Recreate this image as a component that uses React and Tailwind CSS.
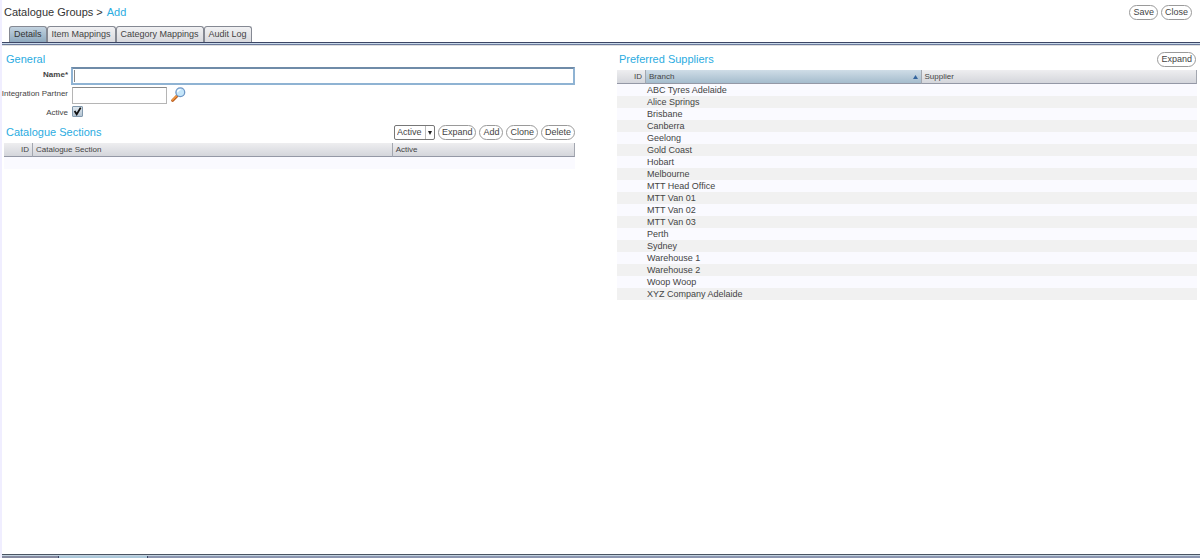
import React, { useState } from 'react';

const tabs = ['Details', 'Item Mappings', 'Category Mappings', 'Audit Log'];

const branches = [
  'ABC Tyres Adelaide',
  'Alice Springs',
  'Brisbane',
  'Canberra',
  'Geelong',
  'Gold Coast',
  'Hobart',
  'Melbourne',
  'MTT Head Office',
  'MTT Van 01',
  'MTT Van 02',
  'MTT Van 03',
  'Perth',
  'Sydney',
  'Warehouse 1',
  'Warehouse 2',
  'Woop Woop',
  'XYZ Company Adelaide',
];

const PillButton = ({ children }) => (
  <button
    type="button"
    className="h-[15px] px-[3px] rounded-full border border-[#9a9a9a] bg-white text-[9px] leading-[13px] text-[#444] hover:bg-gray-100"
  >
    {children}
  </button>
);

const SectionTitle = ({ children }) => (
  <h2 className="text-[11px] leading-[14px] text-[#2bacdf]">{children}</h2>
);

const HeaderCell = ({ children, className = '' }) => (
  <th
    scope="col"
    className={`h-[14px] p-0 px-[3px] border-r border-b border-r-[#a3a7b0] border-b-[#9498a6] text-[8px] leading-[12px] font-normal text-[#444] ${className}`}
  >
    {children}
  </th>
);

const SearchIcon = () => (
  <svg viewBox="0 0 15 15" className="w-[15px] h-[15px]" aria-hidden="true">
    <path d="M1.6 13.4 L6 9" stroke="#b85a1c" strokeWidth="2.8" strokeLinecap="round" />
    <path d="M1.5 13 L5.6 8.9" stroke="#f2993f" strokeWidth="1.5" strokeLinecap="round" />
    <circle cx="9.3" cy="5.3" r="4.4" fill="#c5e6fa" stroke="#6f97c6" strokeWidth="1.3" />
    <path d="M6.6 5.2 A2.8 2.8 0 0 1 9.6 2.6" fill="none" stroke="#fff" strokeWidth="1.3" />
  </svg>
);

const App = () => {
  const [activeTab, setActiveTab] = useState('Details');
  const [form, setForm] = useState({ name: '', partner: '', active: true });
  const [filter, setFilter] = useState('Active');

  const handleChange = (e) => {
    const { name, type, checked, value } = e.target;
    setForm({ ...form, [name]: type === 'checkbox' ? checked : value });
  };

  return (
    <div className="min-h-screen flex flex-col border-l-2 border-[#f0eeff] bg-white font-['Liberation_Sans',Arial,sans-serif] text-[#444]">
      <header>
        <div className="flex justify-between items-start pl-[2px] pr-2 pt-[5px]">
          <h1 className="flex gap-1 text-[11px] leading-[15px] text-[#333]">
            <span>Catalogue Groups &gt;</span>
            <span className="text-[#2bacdf]">Add</span>
          </h1>
          <div className="flex gap-[3px]">
            <PillButton>Save</PillButton>
            <PillButton>Close</PillButton>
          </div>
        </div>

        <nav className="flex pl-[7px] pt-[6px]">
          {tabs.map((tab) => (
            <button
              key={tab}
              type="button"
              onClick={() => setActiveTab(tab)}
              className={`h-4 px-1 rounded-t-[3px] border border-b-0 border-[#858993] text-[9px] leading-[15px] bg-linear-to-b ${
                tab === activeTab
                  ? 'from-[#c3d3e0] to-[#8ea9be] text-[#333]'
                  : 'from-[#f1f1f3] to-[#d9dade] text-[#444]'
              }`}
            >
              {tab}
            </button>
          ))}
        </nav>
        <div className="h-[3px] border-t border-b border-t-[#3d4665] border-b-[#6b7a9c] bg-[#c9d9ea]" />
        <div className="h-px bg-[#dedede]" />
      </header>

      <main className="flex-1 grid grid-cols-[571fr_580fr] gap-x-[42px] pl-[2px] pr-[3px] pt-[6px] items-start">
        <div>
          <div className="pl-[2px] h-[15px]">
            <SectionTitle>General</SectionTitle>
          </div>

          <form onSubmit={(e) => e.preventDefault()} className="flex flex-col gap-[2px] text-[8px]">
            <div className="flex gap-[3px]">
              <label htmlFor="name" className="w-16 flex justify-end leading-[16px] font-bold">
                Name*
              </label>
              <div className="relative flex-1">
                <input
                  id="name"
                  type="text"
                  name="name"
                  value={form.name}
                  onChange={handleChange}
                  className="block w-full h-[18px] px-1 border-2 border-[#8fb3d3] border-t-[#6f8ba8] bg-white text-[9px] outline-none"
                />
                {form.name === '' && (
                  <span className="absolute left-[3px] top-[3px] w-px h-3 bg-[#888] pointer-events-none" />
                )}
              </div>
            </div>

            <div className="flex gap-1">
              <label
                htmlFor="partner"
                className="w-16 flex justify-end leading-[14px] whitespace-nowrap"
              >
                Integration Partner
              </label>
              <input
                id="partner"
                type="text"
                name="partner"
                value={form.partner}
                onChange={handleChange}
                className="w-[95px] h-[17px] px-1 border border-[#b5b5b5] border-t-[#8a8a8a] bg-white text-[9px] outline-none"
              />
              <button type="button" aria-label="Search partners" className="w-[15px] h-[15px]">
                <SearchIcon />
              </button>
            </div>

            <div className="flex gap-1">
              <label htmlFor="active" className="w-16 flex justify-end leading-[14px]">
                Active
              </label>
              <div className="relative w-[11px] h-[11px]">
                <input
                  id="active"
                  type="checkbox"
                  name="active"
                  checked={form.active}
                  onChange={handleChange}
                  className="block w-[11px] h-[11px] appearance-none rounded-[1px] border border-[#8299ad] bg-linear-to-b from-[#dfe8ef] to-[#b4c4d2]"
                />
                {form.active && (
                  <svg
                    viewBox="0 0 11 11"
                    className="absolute inset-0 w-[11px] h-[11px] pointer-events-none"
                    aria-hidden="true"
                  >
                    <path d="M2.6 5 L4.7 8.3 L8.7 1.6" fill="none" stroke="#111" strokeWidth="1.8" />
                  </svg>
                )}
              </div>
            </div>
          </form>

          <div className="flex justify-between items-start pl-[2px] pt-[5px] pb-[3px]">
            <SectionTitle>Catalogue Sections</SectionTitle>
            <div className="flex gap-[3px]">
              <div className="relative">
                <select
                  aria-label="Status filter"
                  value={filter}
                  onChange={(e) => setFilter(e.target.value)}
                  className="block w-[41px] h-[15px] pl-[2px] appearance-none rounded-[2px] border border-[#777] bg-white text-[9px] leading-[13px] text-[#444]"
                >
                  <option>Active</option>
                  <option>Inactive</option>
                  <option>All</option>
                </select>
                <span className="absolute right-px top-px w-[9px] h-[13px] border-l border-[#bbb] flex items-center justify-center pointer-events-none">
                  <svg viewBox="0 0 4 4" className="w-1 h-1" aria-hidden="true">
                    <path d="M0 0 H4 L2 4 Z" fill="#222" />
                  </svg>
                </span>
              </div>
              <PillButton>Expand</PillButton>
              <PillButton>Add</PillButton>
              <PillButton>Clone</PillButton>
              <PillButton>Delete</PillButton>
            </div>
          </div>

          <table className="w-full table-fixed border-separate border-spacing-0">
            <thead className="bg-linear-to-b from-[#eeeef0] to-[#d2d4da]">
              <tr>
                <HeaderCell className="w-[29px] text-right">ID</HeaderCell>
                <HeaderCell className="w-[63%] text-left">Catalogue Section</HeaderCell>
                <HeaderCell className="text-left">Active</HeaderCell>
              </tr>
            </thead>
            <tbody>
              <tr className="bg-[#fafaff]">
                <td className="h-3 p-0" colSpan={3} />
              </tr>
            </tbody>
          </table>
        </div>

        <div>
          <div className="flex justify-between pl-[2px] pr-px pb-[3px]">
            <SectionTitle>Preferred Suppliers</SectionTitle>
            <PillButton>Expand</PillButton>
          </div>

          <table className="w-full table-fixed border-separate border-spacing-0">
            <thead className="bg-linear-to-b from-[#eeeef0] to-[#d2d4da]">
              <tr>
                <HeaderCell className="w-[29px] text-right">ID</HeaderCell>
                <HeaderCell className="w-[47.5%] text-left bg-linear-to-b from-[#cfdde7] to-[#a5bccd]">
                  <span className="flex items-center justify-between">
                    Branch
                    <svg viewBox="0 0 5 4" className="w-[5px] h-1" aria-hidden="true">
                      <path d="M2.5 0 L5 4 H0 Z" fill="#34659e" />
                    </svg>
                  </span>
                </HeaderCell>
                <HeaderCell className="text-left">Supplier</HeaderCell>
              </tr>
            </thead>
            <tbody className="text-[9px] leading-[12px]">
              {branches.map((branch) => (
                <tr key={branch} className="bg-[#fafaff] even:bg-[#f1f1f1]">
                  <td className="h-3 p-0" />
                  <td className="h-3 p-0 pl-px">{branch}</td>
                  <td className="h-3 p-0" />
                </tr>
              ))}
            </tbody>
          </table>
        </div>
      </main>

      {/* top edge of the docked window bar */}
      <footer className="border-t border-[#4a5462]">
        <div className="h-px bg-[#c3d3e0]" />
        <div className="flex h-[2px] bg-[#8c96b0]">
          <div className="w-[56px] bg-[#858aa0]" />
          <div className="w-[90px] border-x border-[#3d4665] bg-[#adc8da]" />
        </div>
      </footer>
    </div>
  );
};

export default App;
